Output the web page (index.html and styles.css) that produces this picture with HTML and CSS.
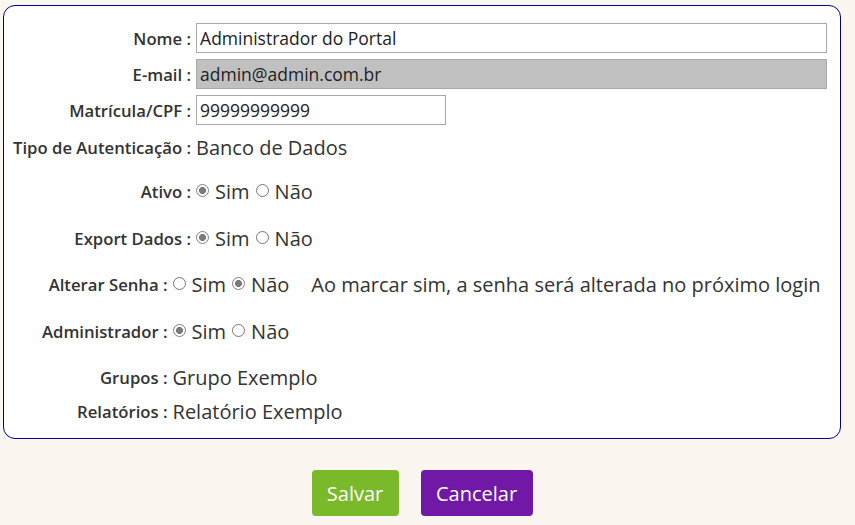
FILE: index.html
```html
<!DOCTYPE html>
<html lang="pt-BR">
<head>
<meta charset="utf-8">
<title>Usuário</title>
<link rel="stylesheet" href="styles.css">
</head>
<body>
<div class="page">
  <div class="card">
    <div class="grid grid-a">
      <label class="lbl">Nome :</label>
      <div class="val"><input class="txt txt-wide" type="text" value="Administrador do Portal"></div>
      <label class="lbl">E-mail :</label>
      <div class="val"><input class="txt txt-wide txt-disabled" type="text" value="admin@admin.com.br" readonly></div>
      <label class="lbl">Matrícula/CPF :</label>
      <div class="val"><input class="txt txt-short" type="text" value="99999999999"></div>
      <span class="lbl">Tipo de Autenticação :</span>
      <div class="val text">Banco de Dados</div>
      <span class="lbl">Ativo :</span>
      <div class="val radios"><input type="radio" class="rd" name="ativo" checked><span>Sim</span><input type="radio" class="rd" name="ativo"><span>Não</span></div>
      <span class="lbl">Export Dados :</span>
      <div class="val radios"><input type="radio" class="rd" name="exp" checked><span>Sim</span><input type="radio" class="rd" name="exp"><span>Não</span></div>
    </div>
    <div class="grid grid-b">
      <span class="lbl">Alterar Senha :</span>
      <div class="val radios"><input type="radio" class="rd" name="senha"><span>Sim</span><input type="radio" class="rd" name="senha" checked><span>Não</span><span class="hint">Ao marcar sim, a senha será alterada no próximo login</span></div>
      <span class="lbl">Administrador :</span>
      <div class="val radios"><input type="radio" class="rd" name="adm" checked><span>Sim</span><input type="radio" class="rd" name="adm"><span>Não</span></div>
      <span class="lbl">Grupos :</span>
      <div class="val text">Grupo Exemplo</div>
      <span class="lbl">Relatórios :</span>
      <div class="val text">Relatório Exemplo</div>
    </div>
  </div>
  <div class="actions">
    <button class="btn btn-save" type="button">Salvar</button>
    <button class="btn btn-cancel" type="button">Cancelar</button>
  </div>
</div>
</body>
</html>
```
FILE: styles.css
```css
html, body {
  margin: 0;
  padding: 0;
  background: #fbf6f0;
  font-family: "Open Sans", "Noto Sans", sans-serif;
  color: #333;
}
.page {
  padding: 5px 0 0 3px;
  width: 838px;
}
.card {
  background: #fff;
  border: 1px solid #00008b;
  border-radius: 12px;
  padding: 14px 10px 16px 9px;
}
.grid {
  display: grid;
  grid-template-columns: auto 1fr;
  align-items: center;
  column-gap: 5px;
}
.grid-a {
  grid-template-rows: 36px 36px 36px 38px 51px 43px;
}
.grid-b {
  margin-left: 29px;
  grid-template-rows: 48px 46px 46px 22px;
}
.lbl {
  text-align: right;
  font-weight: 600;
  font-size: 16.7px;
  color: #333;
  white-space: nowrap;
}
.val {
  font-size: 20px;
  display: flex;
  align-items: center;
}
.txt {
  font-family: "Open Sans", "Noto Sans", sans-serif;
  font-size: 17.5px;
  color: #222;
  height: 30px;
  box-sizing: border-box;
  border: 1px solid #a9a9a9;
  padding: 0 3px;
  background: #fff;
  outline: none;
}
.txt-wide { width: 631px; }
.txt-short { width: 250px; }
.txt-disabled { background: #c0c0c0; }
.radios span { margin-right: 6px; }
.rd {
  appearance: none;
  -webkit-appearance: none;
  width: 13px;
  height: 13px;
  margin: 0 6px 2px 0;
  border: 1px solid #767676;
  border-radius: 50%;
  background: #fff;
  box-sizing: border-box;
}
.rd:checked {
  border-color: #808080;
  background: radial-gradient(circle, #7a7a7a 0 3.2px, #fff 3.8px);
}
.radios .hint { margin-left: 16px; }
.actions {
  display: flex;
  justify-content: center;
  gap: 22px;
  margin-top: 31px;
}
.btn {
  height: 46px;
  border: none;
  border-radius: 4px;
  color: #fff;
  font-family: "Open Sans", "Noto Sans", sans-serif;
  font-size: 20px;
  padding: 0 14px;
}
.btn-save { background: #79b92a; width: 87px; }
.btn-cancel { background: #7119a6; width: 112px; }
```
